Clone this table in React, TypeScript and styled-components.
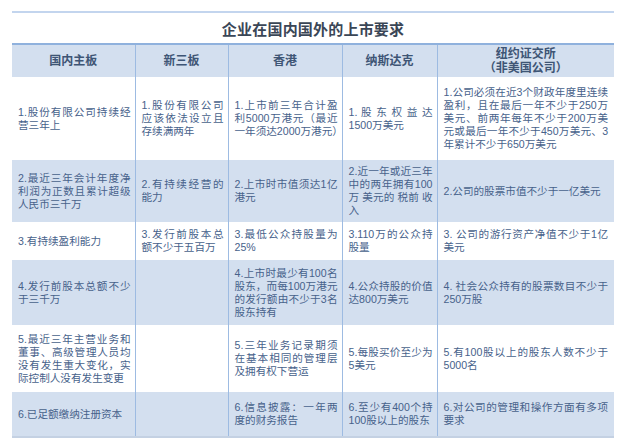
import styled, { createGlobalStyle } from "styled-components"

const GlobalStyle = createGlobalStyle`
  html, body {
    margin: 0;
    padding: 0;
    background: #ffffff;
  }
  body {
    font-family: "Liberation Sans", "Noto Sans CJK SC", sans-serif;
  }
`

const columns = [123, 93, 114, 95, 177]

const headers = ["国内主板", "新三板", "香港", "纳斯达克", "纽约证交所\n（非美国公司）"]

const rows: { height: number; cells: string[] }[] = [
  {
    height: 83,
    cells: [
      "1.股份有限公司持续经营三年上",
      "1.股份有限公司应该依法设立且存续满两年",
      "1.上市前三年合计盈利5000万港元（最近一年须达2000万港元）",
      "1. 股 东 权 益 达 1500万美元",
      "1.公司必须在近3个财政年度里连续盈利，且在最后一年不少于250万美元、前两年每年不少于200万美元或最后一年不少于450万美元、3年累计不少于650万美元",
    ],
  },
  {
    height: 62,
    cells: [
      "2.最近三年会计年度净利润为正数且累计超级人民币三千万",
      "2.有持续经营的能力",
      "2.上市时市值须达1亿港元",
      "2.近一年或近三年中的两年拥有100万 美元的 税前 收入",
      "2.公司的股票市值不少于一亿美元",
    ],
  },
  {
    height: 38,
    cells: [
      "3.有持续盈利能力",
      "3.发行前股本总额不少于五百万",
      "3.最低公众持股量为25%",
      "3.110万的公众持股量",
      "3.  公司的游行资产净值不少于1亿美元",
    ],
  },
  {
    height: 65,
    cells: [
      "4.发行前股本总额不少于三千万",
      "",
      "4.上市时最少有100名股东，而每100万港元的发行额由不少于3名股东持有",
      "4.公众持股的价值达800万美元",
      "4.  社会公众持有的股票数目不少于250万股",
    ],
  },
  {
    height: 67,
    cells: [
      "5.最近三年主营业务和董事、高级管理人员均没有发生重大变化，实际控制人没有发生变更",
      "",
      "5.三年业务记录期须在基本相同的管理层及拥有权下营运",
      "5.每股买价至少为5美元",
      "5.有100股以上的股东人数不少于5000名",
    ],
  },
  {
    height: 45,
    cells: [
      "6.已足额缴纳注册资本",
      "",
      "6.信息披露：一年两度的财务报告",
      "6.至少有400个持100股以上的股东",
      "6.对公司的管理和操作方面有多项要求",
    ],
  },
]

const App = () => {
  return (
    <>
      <GlobalStyle />
      <Page>
        <Table>
          <colgroup>
            {columns.map((w, i) => (
              <col key={i} style={{ width: w }} />
            ))}
          </colgroup>
          <thead>
            <tr>
              <Title colSpan={5}>企业在国内国外的上市要求</Title>
            </tr>
            <tr>
              {headers.map((h, i) => (
                <Head key={i} $first={i === 0}>
                  {h}
                </Head>
              ))}
            </tr>
          </thead>
          <tbody>
            {rows.map((row, r) => (
              <Row key={r} $shaded={r % 2 === 1} style={{ height: row.height }}>
                {row.cells.map((c, i) => (
                  <Cell key={i} $first={i === 0} $last={i === row.cells.length - 1}>
                    {c}
                  </Cell>
                ))}
              </Row>
            ))}
          </tbody>
        </Table>
      </Page>
    </>
  )
}

export default App

const Page = styled.div`
  width: 626px;
  height: 447px;
  padding: 11px 12px 0 12px;
  box-sizing: border-box;
`

const Table = styled.table`
  width: 602px;
  table-layout: fixed;
  border-collapse: collapse;
  border-spacing: 0;
  border-top: 2px solid #c3d5ee;
  border-bottom: 2px solid #c4d1e3;
`

const Title = styled.th`
  height: 30px;
  padding: 0;
  text-align: center;
  vertical-align: middle;
  font-size: 15px;
  font-weight: 700;
  color: #3a4656;
  letter-spacing: 0.2px;
`

const Head = styled.th<{ $first: boolean }>`
  height: 32px;
  padding: 0 4px;
  background: #d3dfef;
  border-top: 2px solid #8fb1dd;
  border-left: ${(p) => (p.$first ? "none" : "1px solid #9dbbe2")};
  text-align: center;
  vertical-align: middle;
  font-size: 12px;
  line-height: 14px;
  font-weight: 700;
  color: #3e5575;
  white-space: pre-line;
`

const Row = styled.tr<{ $shaded: boolean }>`
  background: ${(p) => (p.$shaded ? "#d3dfef" : "#ffffff")};
`

const Cell = styled.td<{ $first: boolean; $last: boolean }>`
  padding: 0 ${(p) => (p.$last ? "6px" : "4px")} 0 6px;
  border-left: ${(p) => (p.$first ? "none" : "1px solid #9dbbe2")};
  vertical-align: middle;
  text-align: justify;
  font-size: 10.6px;
  line-height: 13px;
  color: #47628b;
  text-spacing-trim: trim-end;
`
